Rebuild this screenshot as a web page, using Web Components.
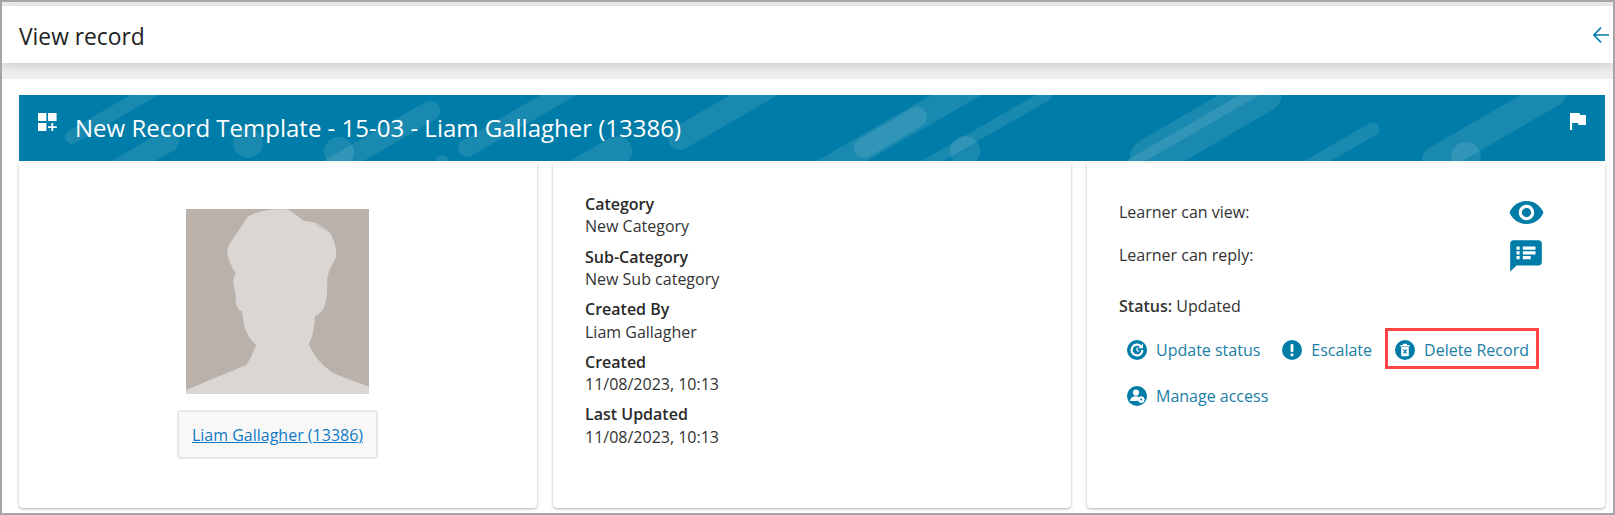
<!DOCTYPE html>
<html lang="en"><head><meta charset="utf-8"><title>View record</title>
<style>
html,body{margin:0;padding:0;background:#fff}
body{font-family:"Open Sans",sans-serif;color:#2f2f2f;font-size:16px}
</style></head><body>
<record-app>
  <page-header slot="header" heading="View record"></page-header>
  <record-banner heading="New Record Template - 15-03 - Liam Gallagher (13386)"></record-banner>
  <record-cards>
  <record-card>
    <div style="display:flex;flex-direction:column;align-items:center;padding:46px 1px 0 0">
      <person-avatar></person-avatar>
      <person-chip>Liam Gallagher (13386)</person-chip>
    </div>
  </record-card>
  <record-card>
    <div style="padding:29.9px 32px 0">
      <detail-field label="Category">New Category</detail-field>
      <detail-field label="Sub-Category">New Sub category</detail-field>
      <detail-field label="Created By">Liam Gallagher</detail-field>
      <detail-field label="Created">11/08/2023, 10:13</detail-field>
      <detail-field label="Last Updated">11/08/2023, 10:13</detail-field>
    </div>
  </record-card>
  <record-card>
    <record-actions></record-actions>
  </record-card>
  </record-cards>
</record-app>

<script>
const ICONS = {
  update:`<circle cx="10" cy="10" r="10" fill="#007ca8"/><path d="M15.4 10a5.4 5.4 0 1 1-1.7-3.9" fill="none" stroke="#fff" stroke-width="2.2"/><path d="M16 3.4v4.8h-4.8z" fill="#fff"/><path d="M10 7.6v2.8l1.8 1.2" fill="none" stroke="#fff" stroke-width="1.2"/>`,
  alert:`<circle cx="10" cy="10" r="10" fill="#007ca8"/><rect x="8.6" y="4" width="2.8" height="8" rx="1" fill="#fff"/><circle cx="10" cy="14.8" r="1.6" fill="#fff"/>`,
  trash:`<circle cx="10" cy="10" r="10" fill="#007ca8"/><path d="M5.4 5h9.2v1.5H5.4zM8 3.8h4V5H8zM6.2 7h7.6v8.2a1 1 0 0 1-1 1H7.2a1 1 0 0 1-1-1z" fill="#fff"/><path d="M8.4 9.6l3.2 3.8M11.6 9.6l-3.2 3.8" stroke="#007ca8" stroke-width="1.3"/>`,
  access:`<circle cx="10" cy="10" r="10" fill="#007ca8"/><circle cx="9" cy="6.6" r="3.1" fill="#fff"/><path d="M3 15c0-3 2.7-4.8 6-4.8 1 0 2 .2 2.8.5L10.5 15z" fill="#fff"/><g transform="translate(14.2 13.6)"><circle r="2.3" fill="none" stroke="#fff" stroke-width="1.7"/><path d="M0-3.6V3.6M-3.6 0H3.6M-2.5-2.5L2.5 2.5M2.5-2.5L-2.5 2.5" stroke="#fff" stroke-width="1.1"/><circle r="1" fill="#007ca8"/></g>`
};

customElements.define('record-app', class extends HTMLElement {
  constructor(){super();this.attachShadow({mode:'open'}).innerHTML=`
  <style>
    :host{display:flex;flex-direction:column;box-sizing:border-box;width:1615px;height:515px;border:2px solid #a5a5a5;background:#fff;overflow:hidden}
    .top{background:#eeeeee;padding:4px 0 16px}
    .main{flex:1;display:flex;flex-direction:column;padding:16px 8px 5px 17px;min-height:0}
  </style>
  <div class="top"><slot name="header"></slot></div>
  <div class="main"><slot></slot></div>`;}
});

customElements.define('record-cards', class extends HTMLElement {
  constructor(){super();this.attachShadow({mode:'open'}).innerHTML=`
  <style>:host{flex:1;display:grid;grid-template-columns:repeat(3,1fr);gap:16px;margin-top:2px;min-height:0}</style><slot></slot>`;}
});

customElements.define('page-header', class extends HTMLElement {
  constructor(){super();this.attachShadow({mode:'open'}).innerHTML=`
  <style>
    :host{display:flex;align-items:center;justify-content:space-between;height:57px;background:#fff;padding:0 4px 0 17px;box-shadow:0 2px 10px rgba(0,0,0,.16);position:relative}
    h1{margin:0;padding-top:5px;font:400 22.8px/28px "Open Sans",sans-serif;color:#222}
    svg{display:block;width:16px;height:16px;margin-top:1px}
  </style>
  <h1></h1>
  <svg viewBox="0 0 16 16" fill="none" stroke="#007ca8" stroke-width="1.6"><path d="M16 8H1.2M8 .6L.9 8l7.1 7.4"/></svg>`;}
  connectedCallback(){this.shadowRoot.querySelector('h1').textContent=this.getAttribute('heading');}
});

customElements.define('record-banner', class extends HTMLElement {
  constructor(){super();this.attachShadow({mode:'open'}).innerHTML=`
  <style>
    :host{display:block;position:relative;height:66px;background:#007ca8;overflow:hidden}
    .deco{position:absolute;inset:0;width:100%;height:100%}
    .row{position:relative;display:flex;align-items:center;height:100%;padding:0 19px}
    .grid{display:block;width:19px;height:18px;margin-top:-12px}
    h2{margin:0 0 0 18px;flex:1;font:400 24px/30px "Open Sans",sans-serif;color:#fff}
    .flag{display:block;width:16px;height:17px;margin-top:-14px}
  </style>
  <svg class="deco" viewBox="19 95 1586 66" preserveAspectRatio="none" fill="none" stroke="#fff" stroke-linecap="round" stroke-opacity=".1">
    <path d="M72 137L170 80" stroke-width="14"/>
    <path d="M168 141L90 186" stroke-width="22"/>
    <path d="M430 111L290 192" stroke-width="20"/>
    <path d="M467 148L590 77" stroke-width="18"/>
    <path d="M680 138L790 74" stroke-width="24"/>
    <path d="M617 151L560 184" stroke-width="30"/>
    <path d="M1000 70L800 185" stroke-width="25"/>
    <path d="M917 117L864 148" stroke-width="20"/>
    <path d="M1047 95L925 165" stroke-width="11"/>
    <path d="M1150 158L1262 93" stroke-width="40"/>
    <path d="M1267 85L1125 167" stroke-width="10"/>
    <path d="M1373 129L1300 171" stroke-width="13"/>
    <path d="M1436 160L1552 93" stroke-width="28"/>
    <g fill="#fff" fill-opacity=".1" stroke="none">
      <circle cx="248" cy="143" r="15"/><circle cx="339" cy="152" r="15"/><circle cx="442" cy="162" r="7"/>
      <circle cx="965" cy="151" r="15"/><circle cx="1466" cy="157" r="15"/>
    </g>
  </svg>
  <div class="row">
    <svg class="grid" viewBox="0 0 19 18" fill="#fff"><rect width="8.4" height="8"/><rect x="10" width="8.6" height="8"/><rect y="10" width="8.4" height="8"/><path d="M13.4 10h1.8v3.2h3.6V15h-3.6v3h-1.8v-3H10v-1.8h3.4z"/></svg>
    <h2></h2>
    <svg class="flag" viewBox="5 4 15 17" fill="#fff" preserveAspectRatio="none"><path d="M14.4 6L14 4H5v17h2v-7h5.6l.4 2h7V6z"/></svg>
  </div>`;}
  connectedCallback(){this.shadowRoot.querySelector('h2').textContent=this.getAttribute('heading');}
});

customElements.define('record-card', class extends HTMLElement {
  constructor(){super();this.attachShadow({mode:'open'}).innerHTML=`
  <style>:host{display:block;background:#fff;border-radius:0 0 4px 4px;box-shadow:0 1px 3px rgba(0,0,0,.32);min-width:0}</style><slot></slot>`;}
});

customElements.define('person-avatar', class extends HTMLElement {
  constructor(){super();this.attachShadow({mode:'open'}).innerHTML=`
  <style>:host{display:block;width:183px;height:185px}svg{display:block;width:100%;height:100%}</style>
  <svg viewBox="521 57 512 555" preserveAspectRatio="none">
    <rect x="521" y="57" width="512" height="555" fill="#b9b1aa"/>
    <path fill="#d9d6d3" d="M521 600L600 565L690 525Q705 500 715 470L717 465Q690 440 682 400L678 365Q660 355 660 330L660 310Q650 280 655 262L660 250Q640 215 636 190Q636 170 650 150Q680 105 690 85Q710 62 780 58L805 58Q830 75 850 92Q900 95 925 130Q945 170 940 205Q920 240 916 265L916 300Q915 365 882 378Q880 430 865 462Q880 510 933 550L1033 590L1033 612L521 612Z"/>
    <path fill="#b9b1aa" d="M878 104Q905 105 920 128Q900 110 878 104Z"/>
  </svg>`;}
});

customElements.define('person-chip', class extends HTMLElement {
  constructor(){super();this.attachShadow({mode:'open'}).innerHTML=`
  <style>
    :host{display:block;margin-top:16px;box-sizing:border-box;height:49px;padding:0 12.5px;background:#f8f8f8;border:2px solid #e8e8e8;border-radius:3px}
    a{display:block;font:400 16px/47px "Open Sans",sans-serif;color:#0f78c4;text-decoration:underline;white-space:nowrap}
  </style><a href="#"><slot></slot></a>`;}
});

customElements.define('detail-field', class extends HTMLElement {
  constructor(){super();this.attachShadow({mode:'open'}).innerHTML=`
  <style>
    :host{display:block;margin-bottom:7.8px;font:400 16px/22.4px "Open Sans",sans-serif;color:#333}
    b{display:block;font-weight:600;color:#2a2a2a}
  </style><b></b><slot></slot>`;}
  connectedCallback(){this.shadowRoot.querySelector('b').textContent=this.getAttribute('label');}
});

customElements.define('action-link', class extends HTMLElement {
  constructor(){super();this.attachShadow({mode:'open'}).innerHTML=`
  <style>
    :host{display:inline-flex;padding-top:2px}
    a{display:flex;align-items:center;gap:9px;font:400 16px/22px "Open Sans",sans-serif;color:#1a7ea6;text-decoration:none;white-space:nowrap}
    svg{display:block;width:20px;height:20px;flex:none}
  </style><a href="#"><svg viewBox="0 0 20 20"></svg><slot></slot></a>`;}
  connectedCallback(){this.shadowRoot.querySelector('svg').innerHTML=ICONS[this.getAttribute('icon')];}
});

customElements.define('record-actions', class extends HTMLElement {
  constructor(){super();this.attachShadow({mode:'open'}).innerHTML=`
  <style>
    :host{display:block;padding:28px 32px 0;font:400 16px/22px "Open Sans",sans-serif;color:#333}
    .row{display:flex;align-items:center;justify-content:space-between;height:43px;padding-right:28px}
    .row span{margin-top:-2px}
    .row svg{display:block}
    .status{margin:18px 0 11px}
    .status b{font-weight:600}
    .links{display:flex;flex-wrap:wrap;align-items:center;margin-left:8px;row-gap:7px}
    .upd{margin-right:22px}
    .esc{margin-right:13px}
    .box{border:3px solid #ff4444;padding:0 7px;height:41px;box-sizing:border-box;display:flex;align-items:center}
    .brk{flex-basis:100%;height:0;margin-top:-7px}
  </style>
  <div class="row"><span>Learner can view:</span><svg width="37" height="37" viewBox="0 0 24 24" fill="#007ca8"><path d="M12 4.5C7 4.5 2.73 7.61 1 12c1.73 4.39 6 7.5 11 7.5s9.27-3.11 11-7.5c-1.73-4.39-6-7.5-11-7.5zM12 17c-2.76 0-5-2.24-5-5s2.24-5 5-5 5 2.24 5 5-2.24 5-5 5zm0-8c-1.66 0-3 1.34-3 3s1.34 3 3 3 3-1.34 3-3-1.34-3-3-3z"/></svg></div>
  <div class="row"><span>Learner can reply:</span><svg width="38" height="38" viewBox="0 0 24 24" fill="#007ca8"><path d="M20 2H4c-1.1 0-1.99.9-1.99 2L2 22l4-4h14c1.1 0 2-.9 2-2V4c0-1.1-.9-2-2-2zM8 14H6v-2h2v2zm0-3H6V9h2v2zm0-3H6V6h2v2zm7 6h-5v-2h5v2zm3-3h-8V9h8v2zm0-3h-8V6h8v2z"/></svg></div>
  <div class="status"><b>Status:</b> Updated</div>
  <div class="links">
    <action-link icon="update" class="upd">Update status</action-link>
    <action-link icon="alert" class="esc">Escalate</action-link>
    <div class="box"><action-link icon="trash">Delete Record</action-link></div>
    <div class="brk"></div>
    <action-link icon="access">Manage access</action-link>
  </div>`;}
});
</script>
</body></html>
